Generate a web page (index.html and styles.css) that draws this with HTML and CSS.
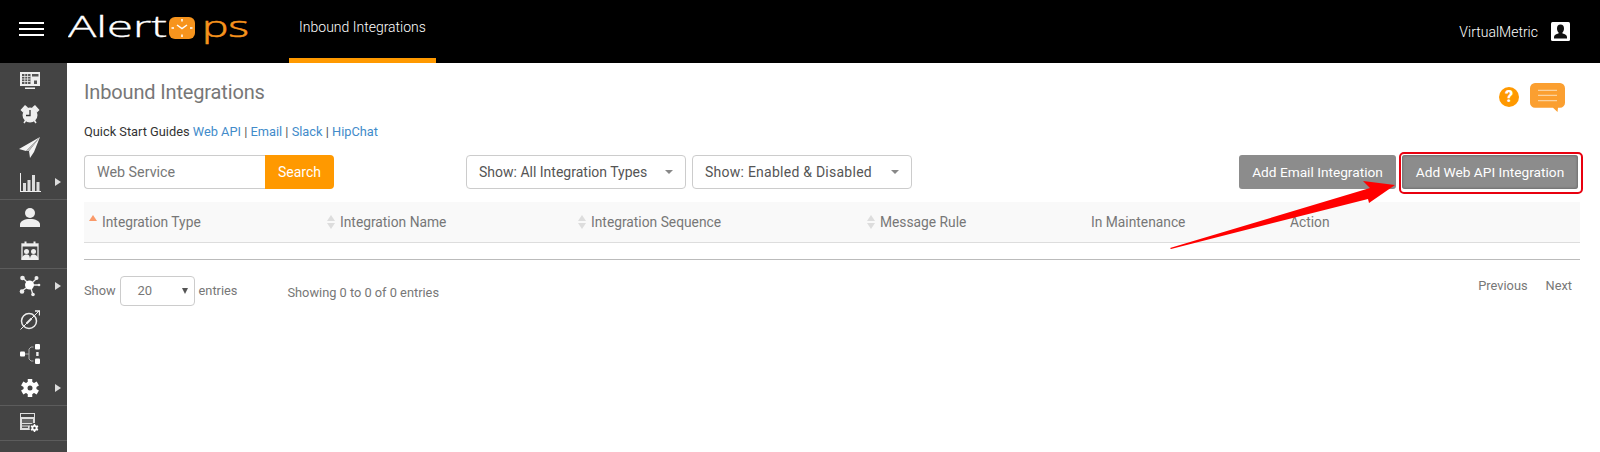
FILE: index.html
```html
<!DOCTYPE html>
<html lang="en">
<head>
    <meta charset="UTF-8">
    <title>Inbound Integrations</title>
    <link rel="stylesheet" href="styles.css">
</head>
<body>
<header class="topbar">
    <div class="burger"><span></span><span></span><span></span></div>
    <svg class="logo" width="182" height="50" viewBox="0 0 182 50">
        <text x="0" y="33" class="logo-alert" textLength="99" lengthAdjust="spacingAndGlyphs">Alert</text>
        <rect x="101" y="13" width="26" height="22" rx="6" fill="#f7941d"/>
        <path d="M114 15v2.500M114 30.500v2.500M103.500 24h2.500M122 24h2.500" stroke="#fff" stroke-width="1.500"/>
        <path d="M109 21l5 3.500 5-3.500" stroke="#fff" stroke-width="1.500" fill="none"/>
        <text x="134" y="33" class="logo-ps" textLength="47" lengthAdjust="spacingAndGlyphs">ps</text>
    </svg>
    <nav class="topnav"><a class="topnav-item">Inbound Integrations</a></nav>
    <div class="account">
        <span>VirtualMetric</span>
        <svg width="19" height="19" viewBox="0 0 19 19">
            <rect width="19" height="19" rx="1.500" fill="#fff"/>
            <path d="M9.500 2.500c2.300 0 3.500 1.700 3.500 3.900 0 1.600-.6 3-1.500 3.900v1.200c2.500.7 4.500 1.700 4.500 3.500v1.500H3v-1.500c0-1.800 2-2.800 4.500-3.500v-1.200C6.600 9.400 6 8 6 6.400c0-2.200 1.200-3.900 3.500-3.900z" fill="#111"/>
        </svg>
    </div>
</header>

<div class="page">
    <aside class="sidebar">
        <div class="side-group">
            <a class="side-item">
                <svg width="20" height="17" viewBox="0 0 20 17"><path d="M0 0h20v14H0z" fill="#eee"/><path d="M2 2h8.500v10H2zM12 2h6.500v2.500H12z" fill="#555"/><path d="M4.800 2v10M7.600 2v10M2 4.500h8.500M2 7h8.500M2 9.500h8.500" stroke="#eee" stroke-width=".8"/><path d="M14 8.500h3V12h-3z" fill="#555"/><path d="M5 15.500h10V17H5z" fill="#eee"/></svg>
            </a>
            <a class="side-item">
                <svg width="20" height="20" viewBox="0 0 20 20"><path d="M0.500 6L5 1l3 2.500-5 5zM19.500 6L15 1l-3 2.500 5 5z" fill="#eee"/><path d="M4 19l2-3M16 19l-2-3" stroke="#eee" stroke-width="1.500"/><circle cx="10" cy="11" r="7.500" fill="#eee"/><path d="M10 6v5.500H6" stroke="#333" stroke-width="1.300" fill="none"/></svg>
            </a>
            <a class="side-item">
                <svg width="22" height="22" viewBox="0 0 22 22"><path d="M21 0L0 12l7 2L21 0 10 14l1 7 4-6z" fill="#f4f4f4"/><path d="M21 0L7 14l3 0z" fill="#bbb"/></svg>
            </a>
            <a class="side-item has-sub">
                <svg width="21" height="19" viewBox="0 0 21 19"><path d="M0 0h1v18h20v1H0z" fill="#eee"/><path d="M3 10h3v8H3zM7.500 7h3v11h-3zM12 2h3v16h-3zM16.500 9h3v9h-3z" fill="#ddd"/></svg>
            </a>
        </div>
        <div class="side-group">
            <a class="side-item">
                <svg width="20" height="19" viewBox="0 0 20 19"><circle cx="10" cy="5" r="5" fill="#eee"/><path d="M0 19v-2.500C0 13 4.500 11 10 11s10 2 10 5.500V19z" fill="#eee"/></svg>
            </a>
            <a class="side-item">
                <svg width="20" height="20" viewBox="0 0 20 20"><path d="M2 3h16v15H2z" fill="none" stroke="#ddd" stroke-width="1.400"/><path d="M2 3h16v2.500H2zM4.500 0.500h2v4h-2zM13.500 0.500h2v4h-2z" fill="#eee"/><circle cx="6.500" cy="10.500" r="2.500" fill="#eee"/><circle cx="13.500" cy="10.500" r="2.500" fill="#eee"/><path d="M1.500 19c0-3 2-5.500 5-5.500s3.500 2 3.500 5.500zM10 19c0-3 .5-5.500 3.500-5.500s5 2.500 5 5.500z" fill="#eee"/></svg>
            </a>
        </div>
        <div class="side-group">
            <a class="side-item has-sub">
                <svg width="22" height="22" viewBox="0 0 22 22"><path d="M11 10L3 2M11 10l7-7M11 10l9 0M11 10L3 16M11 10l3 10" stroke="#eee" stroke-width="1.300"/><circle cx="10.500" cy="10" r="4.500" fill="#fff"/><circle cx="3.500" cy="3" r="2.300" fill="#eee"/><circle cx="17.500" cy="3" r="2" fill="#eee"/><circle cx="20" cy="10" r="1.300" fill="#eee"/><circle cx="3" cy="16.500" r="2.300" fill="#eee"/><circle cx="14" cy="19.500" r="1.800" fill="#eee"/></svg>
            </a>
            <a class="side-item">
                <svg width="20" height="20" viewBox="0 0 20 20"><circle cx="9" cy="11" r="7.500" fill="none" stroke="#eee" stroke-width="1.500"/><path d="M0.500 19.500L19 1" stroke="#eee" stroke-width="1"/><path d="M6.500 13.500l5-5" stroke="#eee" stroke-width="2"/><path d="M15 1h4.500v4.500" fill="none" stroke="#eee" stroke-width="1.300"/></svg>
            </a>
            <a class="side-item">
                <svg width="20" height="20" viewBox="0 0 20 20"><rect x="0" y="7.500" width="5" height="5" rx="1" fill="#fff"/><rect x="15" y="0" width="5" height="5.500" rx="1" fill="#fff"/><rect x="15" y="14.500" width="5" height="5.500" rx="1" fill="#fff"/><rect x="16.200" y="8" width="2.400" height="4" fill="#eee"/><path d="M5 10h4M13.500 3h-2.500L9 5v10l2 2h2.500" fill="none" stroke="#aaa" stroke-width="1"/></svg>
            </a>
            <a class="side-item has-sub">
                <svg width="18" height="18" viewBox="0 0 18 18"><path d="M9 0v18M1.200 4.500l15.600 9M16.800 4.500l-15.600 9" stroke="#fff" stroke-width="4.500"/><circle cx="9" cy="9" r="6.500" fill="#fff"/><circle cx="9" cy="9" r="2.500" fill="#444"/></svg>
            </a>
        </div>
        <div class="side-group">
            <a class="side-item">
                <svg width="20" height="20" viewBox="0 0 20 20"><path d="M0 0h15v17H0z" fill="#ddd"/><path d="M1 1h13v3H1z" fill="#444"/><path d="M2 6h11v4H2z" fill="#666"/><path d="M2 11h11v1.500H2zM2 13.500h6V15H2z" fill="#555"/><circle cx="14.500" cy="15" r="5" fill="#444"/><path d="M14.500 11v8M11 13l7 4M18 13l-7 4" stroke="#fff" stroke-width="1.500"/><circle cx="14.500" cy="15" r="3" fill="#fff"/><circle cx="14.500" cy="15" r="1.200" fill="#444"/></svg>
            </a>
        </div>
    </aside>

    <main class="content">
        <div class="help-icons">
            <span class="help">?</span>
            <svg width="37" height="31" viewBox="0 0 37 30" preserveAspectRatio="none"><path d="M6 1h25a5 5 0 0 1 5 5v14a5 5 0 0 1-5 5h-2l-.5 4-4.500-4H6a5 5 0 0 1-5-5V6a5 5 0 0 1 5-5z" fill="#fb9f30"/><path d="M9 8h19M9 13h19M9 18h19" stroke="#fcd29d" stroke-width="1.200"/></svg>
        </div>
        <h1 class="title">Inbound Integrations</h1>
        <p class="guides">Quick Start Guides <a>Web API</a> <span>|</span> <a>Email</a> <span>|</span> <a>Slack</a> <span>|</span> <a>HipChat</a></p>

        <div class="toolbar">
            <div class="search">
                <input class="search-input" type="text" placeholder="Web Service">
                <button class="btn btn-orange">Search</button>
            </div>
            <div class="filters">
                <div class="dropdown dropdown-types">Show: All Integration Types<i class="caret"></i></div>
                <div class="dropdown dropdown-status">Show: Enabled &amp; Disabled<i class="caret"></i></div>
            </div>
            <div class="actions">
                <button class="btn btn-grey">Add Email Integration</button>
                <button class="btn btn-grey btn-marked">Add Web API Integration</button>
            </div>
        </div>

        <table class="grid">
            <thead>
                <tr>
                    <th class="col-type"><i class="sort sort-asc"></i>Integration Type</th>
                    <th class="col-name"><i class="sort"></i>Integration Name</th>
                    <th class="col-seq"><i class="sort"></i>Integration Sequence</th>
                    <th class="col-rule"><i class="sort"></i>Message Rule</th>
                    <th class="col-maint">In Maintenance</th>
                    <th>Action</th>
                </tr>
            </thead>
        </table>
        <div class="grid-end"></div>

        <div class="grid-footer">
            <div class="length">Show <span class="length-select">20<i class="length-caret"></i></span> entries</div>
            <div class="info">Showing 0 to 0 of 0 entries</div>
            <div class="pager"><a>Previous</a><a>Next</a></div>
        </div>
    </main>
</div>

<!-- red annotation arrow over the page -->
<svg class="arrow" width="240" height="80" viewBox="0 0 240 80">
    <path d="M0 68L200 8 193 1 225 5 199 23 198 19 1 69z" fill="#f00"/>
</svg>
</body>
</html>
```

FILE: styles.css
```css
* {
    box-sizing: border-box;
}
body {
    margin: 0;
    font-family: Roboto, "Liberation Sans", sans-serif;
    font-size: 14px;
    font-weight: 300;
    color: #777;
    background: #fff;
    overflow: hidden;
}
.topbar {
    height: 63px;
    background: #000;
    display: flex;
    align-items: flex-start;
    color: #fff;
}
.burger {
    width: 25px;
    margin: 22px 0 0 19px;
    display: flex;
    flex-direction: column;
    gap: 4px;
}
.burger span {
    height: 2px;
    background: #fff;
}
.logo {
    margin: 4px 0 0 24px;
}
.logo-alert {
    font-family: "Open Sans", sans-serif;
    font-size: 29px;
    fill: #fff;
    stroke: #fff;
    stroke-width: .3;
}
.logo-ps {
    font-family: "Open Sans", sans-serif;
    font-size: 29px;
    fill: #f7941d;
    stroke: #f7941d;
    stroke-width: .5;
}
.topnav {
    margin-left: 39px;
}
.topnav-item {
    display: block;
    width: 147px;
    height: 63px;
    padding-top: 19px;
    text-align: center;
    font-size: 14px;
    line-height: 16px;
    color: #fff;
    border-bottom: 5px solid #f90;
}
.account {
    margin-left: auto;
    margin-right: 30px;
    display: flex;
    align-items: center;
    gap: 13px;
    height: 63px;
    font-size: 14px;
}
.page {
    display: flex;
    height: 389px;
}
.sidebar {
    width: 67px;
    flex: none;
    background: #444;
}
.side-group {
    border-bottom: 1px solid #5c5c5c;
}
.side-item {
    display: flex;
    align-items: center;
    justify-content: center;
    height: 34px;
    padding-right: 7px;
    position: relative;
}
.has-sub::after {
    content: "";
    position: absolute;
    left: 55px;
    top: 13px;
    border-left: 6px solid #ddd;
    border-top: 4px solid transparent;
    border-bottom: 4px solid transparent;
}
.content {
    flex: 1;
    padding: 0 20px 0 17px;
    position: relative;
}
.help-icons {
    position: absolute;
    top: 19px;
    right: 34px;
    display: flex;
    align-items: flex-start;
    gap: 10px;
}
.help {
    width: 20px;
    height: 20px;
    margin-top: 5px;
    border-radius: 50%;
    background: #f90;
    color: #fff;
    font-weight: 900;
    font-size: 16px;
    line-height: 20px;
    text-align: center;
}
.title {
    margin: 0;
    padding-top: 17px;
    font-size: 20px;
    font-weight: 400;
    line-height: 24px;
    color: #777;
    letter-spacing: -.15px;
}
.guides {
    margin: 0;
    padding-top: 21px;
    font-size: 12.800px;
    font-weight: 400;
    line-height: 14px;
    color: #333;
}
.guides a {
    color: #428bca;
}
.guides span {
    color: #555;
}
.toolbar {
    display: flex;
    margin-top: 16px;
    height: 34px;
}
.search {
    display: flex;
    width: 250px;
}
.search-input {
    width: 181px;
    height: 34px;
    padding: 0 12px;
    border: 1px solid #ccc;
    border-right: 0;
    border-radius: 4px 0 0 4px;
    font-family: inherit;
    font-size: 14.300px;
    font-weight: 400;
    outline: none;
}
.search-input::placeholder {
    color: #777;
    opacity: 1;
}
.btn {
    height: 34px;
    border: 0;
    border-radius: 3px;
    font-family: inherit;
    font-size: 14px;
    font-weight: 400;
    color: #fff;
    padding: 0;
}
.btn-orange {
    width: 69px;
    background: #f90;
    border-radius: 0 4px 4px 0;
}
.btn-grey {
    background: #8c8c8c;
    width: 157px;
    font-size: 13.700px;
}
.btn-marked {
    width: 176px;
    margin-left: 6px;
    position: relative;
    box-shadow: inset 0 0 3px #555;
}
.btn-marked::after {
    content: "";
    position: absolute;
    top: -3px;
    left: -3px;
    right: -5px;
    bottom: -5px;
    border: 2px solid #e8000f;
    border-radius: 5px;
}
.filters {
    display: flex;
    gap: 6px;
    margin-left: 132px;
}
.dropdown {
    height: 34px;
    border: 1px solid #ccc;
    border-radius: 4px;
    padding-left: 12px;
    font-size: 14px;
    font-weight: 400;
    line-height: 32px;
    color: #555;
    position: relative;
}
.dropdown-types {
    width: 220px;
}
.dropdown-status {
    width: 220px;
    letter-spacing: .25px;
}
.caret {
    position: absolute;
    right: 12px;
    top: 14px;
    border-top: 4px solid #888;
    border-left: 4px solid transparent;
    border-right: 4px solid transparent;
}
.actions {
    display: flex;
    margin-left: auto;
    padding-right: 2px;
}
.grid {
    width: 100%;
    margin-top: 13px;
    border-collapse: collapse;
    table-layout: fixed;
}
.grid th {
    height: 40px;
    padding: 0 5px;
    background: #f9f9f9;
    border-bottom: 1px solid #ddd;
    font-size: 13.800px;
    font-weight: 400;
    text-align: left;
    color: #777;
    white-space: nowrap;
}
.col-type { width: 238px; }
.col-name { width: 251px; }
.col-seq { width: 289px; }
.col-rule { width: 224px; }
.col-maint { width: 199px; }
.sort {
    display: inline-block;
    width: 8px;
    height: 14px;
    margin-right: 5px;
    vertical-align: -2px;
    position: relative;
}
.sort::before,
.sort::after {
    content: "";
    position: absolute;
    left: 0;
    border-left: 4px solid transparent;
    border-right: 4px solid transparent;
}
.sort::before {
    top: 0;
    border-bottom: 6px solid #ddd;
}
.sort::after {
    bottom: 0;
    border-top: 6px solid #ddd;
}
.sort-asc::before {
    border-bottom-color: #fa9a6a;
}
.sort-asc::after {
    display: none;
}
.grid-end {
    margin-top: 16px;
    border-top: 1px solid #bbb;
}
.grid-footer {
    display: flex;
    font-size: 12.800px;
    font-weight: 400;
    color: #777;
}
.length {
    display: flex;
    align-items: center;
    height: 30px;
    margin-top: 16px;
    gap: 3px;
}
.length-select {
    width: 75px;
    height: 30px;
    margin: 0 1px;
    padding-left: 17px;
    border: 1px solid #ccc;
    border-radius: 4px;
    font-size: 13px;
    line-height: 28px;
    position: relative;
}
.length-caret {
    position: absolute;
    right: 6px;
    top: 11px;
    border-top: 6px solid #555;
    border-left: 3px solid transparent;
    border-right: 3px solid transparent;
}
.info {
    margin: 26px 0 0 50px;
    line-height: 14px;
}
.pager {
    margin-left: auto;
    margin-top: 19px;
    padding-right: 8px;
    display: flex;
    gap: 18px;
    line-height: 14px;
}
.arrow {
    position: absolute;
    left: 1170px;
    top: 180px;
}
```
